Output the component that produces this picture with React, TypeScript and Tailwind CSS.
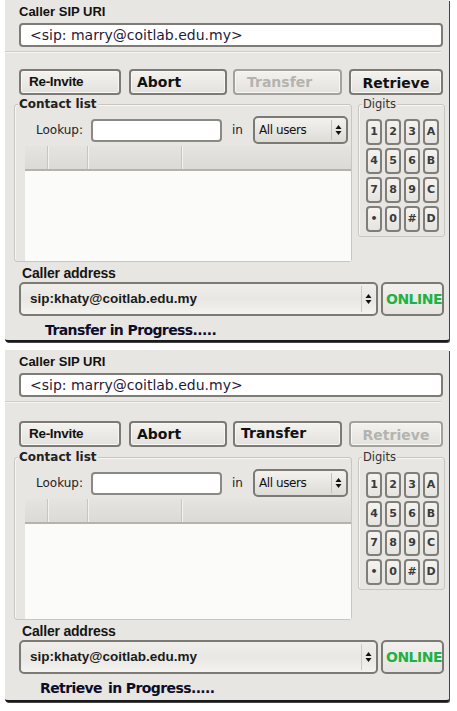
import React from "react";

const ARIAL = "font-['Liberation_Sans',Arial,sans-serif]";
const DEJA = "font-['DejaVu_Sans',Verdana,sans-serif]";

function Spinner() {
  return (
    <svg width="7" height="12" viewBox="0 0 7 12">
      <polygon points="3.5,1 6.5,5 0.5,5" fill="#111" />
      <polygon points="3.5,11 6.5,7 0.5,7" fill="#111" />
    </svg>
  );
}

function Btn({
  w,
  label,
  disabled,
  className,
  textClass,
}: {
  w: string;
  label: string;
  disabled?: boolean;
  className?: string;
  textClass?: string;
}) {
  return (
    <div
      className={`${w} h-[26px] shrink-0 rounded-[4px] border-2 ${
        disabled ? "border-[#a3a29d]" : "border-[#7b7a75]"
      } bg-gradient-to-b from-[#f3f2ef] to-[#e4e2de] shadow-[inset_0_0_0_1px_#f8f7f5] flex ${
        className ?? ""
      }`}
    >
      <span
        className={`${textClass ?? ""} ${
          disabled ? "text-[#b4b3ae]" : "text-[#111]"
        } whitespace-nowrap`}
      >
        {label}
      </span>
    </div>
  );
}

function DigitKey({ k }: { k: string }) {
  return (
    <div className="w-[16px] h-[26px] rounded-[4px] border-2 border-[#7f7e79] bg-gradient-to-b from-[#f4f3f0] to-[#e6e4e0] flex items-center justify-center">
      <span className={`${DEJA} text-[11px] font-bold text-[#3a3a3a]`}>{k}</span>
    </div>
  );
}

function Panel({ second }: { second?: boolean }) {
  const keys = ["1", "2", "3", "A", "4", "5", "6", "B", "7", "8", "9", "C", "•", "0", "#", "D"];
  return (
    <div
      className={`ml-[5px] w-[444px] ${
        second ? "h-[352px]" : "h-[342px]"
      } bg-[#e8e6e2] border-b-2 border-[#1a1a1a] rounded-b-[3px] shadow-[1px_1px_0_#444] flex flex-col relative`}
    >
      {/* Caller SIP URI */}
      <div className={`${ARIAL} ml-[14px] mt-[4px] h-[16px] leading-[16px] text-[13px] font-bold text-[#111]`}>
        Caller SIP URI
      </div>
      <div className="ml-[14px] mt-[3px] w-[424px] h-[24px] rounded-[4px] border-2 border-[#7d7c77] bg-white flex items-center pl-[9px]">
        <span className={`${DEJA} text-[14px] text-[#1f1a3a]`}>&lt;sip: marry@coitlab.edu.my&gt;</span>
      </div>
      <div className="mt-[4px] w-[436px] border-b border-[#cfcdc8] shadow-[0_1px_0_#f6f5f2]" />

      {/* Buttons */}
      <div className={`ml-[14px] ${second ? "mt-[19px]" : "mt-[17px]"} flex`}>
        <Btn
          w="w-[102px]"
          label="Re-Invite"
          className="items-end pl-[8px] pb-[1px]"
          textClass={`${ARIAL} text-[13.5px] font-bold tracking-[-0.3px]`}
        />
        <Btn
          w="w-[98px] ml-[8px]"
          label="Abort"
          className="items-start pl-[6px] pt-[1px]"
          textClass={`${DEJA} text-[14px] font-bold`}
        />
        <Btn
          w="w-[109px] ml-[6px]"
          label="Transfer"
          disabled={!second}
          className={second ? "items-start pl-[6px]" : "items-center pl-[12px]"}
          textClass={`${DEJA} text-[14px] font-bold`}
        />
        <Btn
          w="w-[94px] ml-[7px]"
          label="Retrieve"
          disabled={!!second}
          className="items-center justify-center pt-[2px]"
          textClass={`${DEJA} text-[14px] font-bold`}
        />
      </div>

      {/* Groups */}
      <div className={`ml-[9px] ${second ? "mt-[10px]" : "mt-[9px]"} flex items-start`}>
        {/* Contact list */}
        <div
          className={`relative w-[338px] ${
            second ? "h-[163px]" : "h-[158px]"
          } border border-[#c8c6c1] rounded-[3px] shadow-[inset_1px_1px_0_#f7f6f3] flex flex-col`}
        >
          <div className={`${DEJA} absolute -top-[8px] left-[3px] px-[1px] bg-[#e8e6e2] text-[12px] font-bold leading-[14px] text-[#222]`}>
            Contact list
          </div>
          <div className="mt-[11px] flex items-center">
            <span className={`${DEJA} ml-[21px] w-[55px] text-[12px] text-[#222]`}>Lookup:</span>
            <div className="w-[131px] h-[23px] rounded-[4px] border-2 border-[#8a8984] bg-white" />
            <span className={`${DEJA} ml-[10px] text-[12px] text-[#222]`}>in</span>
            <div className="ml-[10px] w-[95px] h-[28px] rounded-[5px] border-2 border-[#7b7a75] bg-gradient-to-b from-[#f3f2ef] to-[#dedcd7] flex items-center">
              <span className={`${DEJA} ml-[4px] text-[12px] tracking-[-0.4px] text-[#111]`}>All users</span>
              <div className="ml-auto h-[20px] border-l border-[#c2c0bb] w-[14px] flex items-center justify-center mr-[1px]">
                <Spinner />
              </div>
            </div>
          </div>
          {/* table */}
          <div className="ml-[10px] mt-[2px] w-[326px] flex-1 flex flex-col">
            <div className="h-[25px] bg-gradient-to-b from-[#e6e4e0] to-[#dcdad6] border-b-2 border-[#b5b3ae] flex">
              <div className="w-[23px] border-r border-[#c7c5c0] shadow-[1px_0_0_#f3f2ef]" />
              <div className="w-[40px] border-r border-[#c7c5c0] shadow-[1px_0_0_#f3f2ef]" />
              <div className="w-[94px] border-r border-[#c7c5c0] shadow-[1px_0_0_#f3f2ef]" />
              <div className="flex-1" />
            </div>
            <div className="flex-1 bg-[#fbfbfa]" />
          </div>
        </div>

        {/* Digits */}
        <div className="relative ml-[6px] w-[87px] h-[133px] border border-[#c8c6c1] rounded-[3px] shadow-[inset_1px_1px_0_#f7f6f3]">
          <div className={`${DEJA} absolute -top-[8px] left-[3px] px-[1px] bg-[#e8e6e2] text-[11.5px] leading-[14px] text-[#333]`}>
            Digits
          </div>
          <div className="mt-[14px] ml-[7px] grid grid-cols-4 gap-x-[3px] gap-y-[3px] w-[73px]">
            {keys.map((k) => (
              <DigitKey key={k} k={k} />
            ))}
          </div>
        </div>
      </div>

      {/* Caller address */}
      <div className={`${ARIAL} ml-[17px] mt-[3px] h-[16px] leading-[16px] text-[14px] font-bold text-[#151515] tracking-[-0.2px]`}>
        Caller address
      </div>
      <div className="ml-[14px] mt-[1px] flex">
        <div className="w-[359px] h-[34px] rounded-[5px] border-2 border-[#7b7a75] bg-gradient-to-b from-[#efeeea] via-[#e9e7e3] to-[#f4f3f0] flex items-center">
          <span className={`${ARIAL} ml-[9px] text-[13.5px] font-bold text-[#1a1a1a]`}>sip:khaty@coitlab.edu.my</span>
          <div className="ml-auto h-[26px] border-l border-[#cbc9c4] w-[14px] flex items-center justify-center mr-[1px]">
            <Spinner />
          </div>
        </div>
        <div className="ml-[3px] w-[63px] h-[34px] rounded-[5px] border-2 border-[#7b7a75] bg-gradient-to-b from-[#f1f0ed] to-[#e6e4e0] flex items-center">
          <span className={`${DEJA} ml-[3px] text-[14px] font-bold text-[#1db146] tracking-[-0.5px] whitespace-nowrap`}>ONLINE</span>
        </div>
      </div>

      {/* Status */}
      <div className={`${DEJA} ${second ? "ml-[35px]" : "ml-[40px]"} mt-[5px] text-[14px] font-bold text-[#0d0d2a] tracking-[-0.6px] leading-[18px]`}>
        {second ? (
          <>
            Retrieve<span className="ml-[6px]">in Progress.....</span>
          </>
        ) : (
          "Transfer in Progress....."
        )}
      </div>
    </div>
  );
}

export default function App() {
  return (
    <div className="w-[457px] h-[711px] bg-white">
      <Panel />
      <div className="h-[8px]" />
      <Panel second />
    </div>
  );
}
